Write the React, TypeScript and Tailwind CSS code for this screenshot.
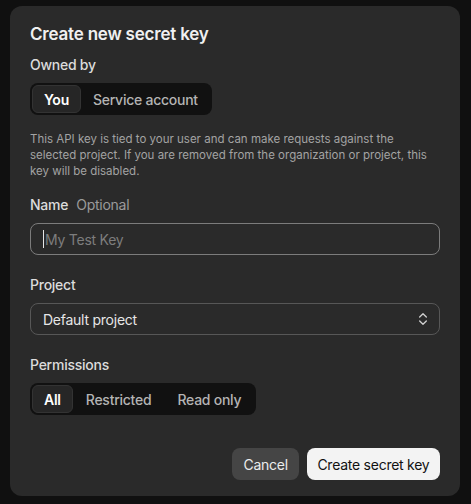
import React from "react";

function Segmented({ items, active, pad }: { items: string[]; active: number; pad: string }) {
  return (
    <div className="inline-flex h-8 items-stretch rounded-lg bg-[#111111] p-[2px]">
      {items.map((it, i) => (
        <div
          key={it}
          className={
            i === active
              ? "flex items-center rounded-md border border-[#333333] bg-[#262626] px-[11px] text-[14px] font-semibold tracking-[-0.25px] text-white"
              : pad + " flex items-center text-[14px] font-medium tracking-[-0.25px] text-[#b4b4b4]"
          }
        >
          {it}
        </div>
      ))}
    </div>
  );
}

export default function App() {
  return (
    <div
      className="min-h-[504px] w-[471px] bg-[#101010] pt-[6px] pl-[10px]"
      style={{ fontFamily: "Inter, 'Noto Sans', sans-serif" }}
    >
      <div className="flex h-[490px] w-[450px] flex-col rounded-xl bg-[#2a2a2a] px-5 pt-4">
        <h1 className="text-[17px] font-semibold leading-6 tracking-[-0.2px] text-[#f0f0f0]">Create new secret key</h1>
        <div className="mt-[9px] text-[14px] font-medium leading-5 tracking-[-0.25px] text-[#dcdcdc]">Owned by</div>
        <div className="mt-2">
          <Segmented items={["You", "Service account"]} active={0} pad="px-[12px]" />
        </div>
        <p className="mt-4 text-[11.5px] leading-4 text-[#a3a3a3]">
          This API key is tied to your user and can make requests against the selected project. If you are removed
          from the organization or project, this key will be disabled.
        </p>
        <div className="mt-4 flex items-baseline gap-2 text-[14px] leading-5 tracking-[-0.25px]">
          <span className="font-medium text-[#dcdcdc]">Name</span>
          <span className="text-[#9a9a9a]">Optional</span>
        </div>
        <div className="mt-2 flex h-8 items-center rounded-lg border border-[#7c7c7c] px-3">
          <span className="mr-[1px] h-[18px] w-[1px] bg-[#e5e5e5]" />
          <span className="text-[14px] tracking-[-0.25px] text-[#7d7d7d]">My Test Key</span>
        </div>
        <div className="mt-5 text-[14px] font-medium leading-5 tracking-[-0.25px] text-[#dcdcdc]">Project</div>
        <div className="mt-2 flex h-8 items-center justify-between rounded-lg border border-[#575757] pl-3 pr-2">
          <span className="text-[14px] tracking-[-0.25px] text-[#e6e6e6]">Default project</span>
          <svg width="16" height="16" viewBox="0 0 24 24" fill="none" stroke="#cfcfcf" strokeWidth="2" strokeLinecap="round" strokeLinejoin="round">
            <path d="m7 15 5 5 5-5" />
            <path d="m7 9 5-5 5 5" />
          </svg>
        </div>
        <div className="mt-5 text-[14px] font-medium leading-5 tracking-[-0.25px] text-[#dcdcdc]">Permissions</div>
        <div className="mt-2">
          <Segmented items={["All", "Restricted", "Read only"]} active={0} pad="px-[13px]" />
        </div>
        <div className="mt-[33px] flex justify-end gap-2">
          <button className="h-8 rounded-lg bg-[#454545] px-[11px] text-[14px] tracking-[-0.25px] text-[#ececec]">Cancel</button>
          <button className="h-8 rounded-lg bg-[#f3f3f3] px-[10.5px] text-[14px] tracking-[-0.25px] text-[#111111]">Create secret key</button>
        </div>
      </div>
    </div>
  );
}
